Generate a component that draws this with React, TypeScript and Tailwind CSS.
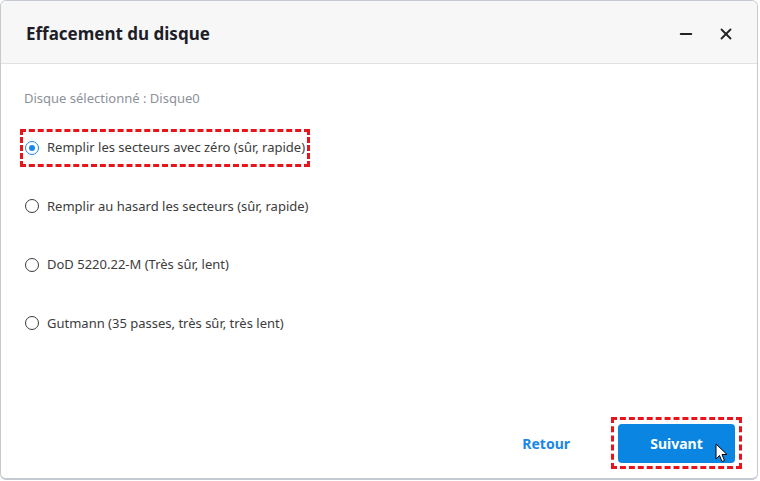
import { Minus, X } from 'lucide-react'

const options = [
  'Remplir les secteurs avec zéro (sûr, rapide)',
  'Remplir au hasard les secteurs (sûr, rapide)',
  'DoD 5220.22-M (Très sûr, lent)',
  'Gutmann (35 passes, très sûr, très lent)',
]

function Radio({ checked }: { checked: boolean }) {
  return (
    <span
      className={
        checked
          ? 'flex h-[14px] w-[14px] items-center justify-center rounded-full border-[1.5px] border-[#1a86e8]'
          : 'flex h-[14px] w-[14px] items-center justify-center rounded-full border-[1.5px] border-[#3a3a3a]'
      }
    >
      {checked && <span className="h-[6px] w-[6px] rounded-full bg-[#1a86e8]" />}
    </span>
  )
}

function Cursor() {
  return (
    <svg className="absolute left-[715px] top-[443px]" width="14" height="21" viewBox="0 0 14 21">
      <path d="M1 1 L1 16 L4.5 12.5 L7 18.5 L9.5 17.5 L7 11.5 L12 11.5 Z" fill="#fff" stroke="#000" strokeWidth="1" strokeLinejoin="round" />
    </svg>
  )
}

export default function App() {
  return (
    <div className="relative h-[481px] w-[760px] bg-white" style={{ fontFamily: '"Noto Sans", "Segoe UI", sans-serif' }}>
      <div className="flex h-[480px] w-[758px] flex-col overflow-hidden rounded-[6px] border border-b-2 border-[#c5c9d1] bg-white">
        <div className="flex h-[63px] shrink-0 items-center justify-between border-b border-[#e2e2e2] bg-[#f7f7f7] pl-[25px] pr-[22px] pt-[3px]">
          <h1 className="text-[17px] font-bold text-[#1e1e28]">Effacement du disque</h1>
          <div className="flex items-center gap-[22px]">
            <Minus size={18} strokeWidth={2.6} className="text-[#222]" />
            <X size={18} strokeWidth={2.4} className="text-[#222]" />
          </div>
        </div>
        <div className="flex flex-1 flex-col pl-[23px] pr-[15px] pt-[25px]">
          <p className="text-[13px] text-[#8d9199]">Disque sélectionné : Disque0</p>
          <div className="mt-[10px] flex flex-col">
            {options.map((o, i) => (
              <div key={o} className="flex h-[58.5px] items-center">
                <label
                  className={
                    i === 0
                      ? '-ml-[4px] flex h-[38px] items-center gap-[8px] border-[3px] border-dashed border-[#e8141c] pl-[2px] pr-[2px]'
                      : 'flex items-center gap-[8px] pl-[1px]'
                  }
                >
                  <Radio checked={i === 0} />
                  <span className="text-[13px] text-[#3c3c3c]">{o}</span>
                </label>
              </div>
            ))}
          </div>
          <div className="mt-auto mb-[9px] flex items-center justify-end gap-[41px]">
            <button className="text-[14px] font-bold text-[#1a86e8]">Retour</button>
            <div className="flex h-[52px] w-[131px] items-center justify-center border-[3px] border-dashed border-[#e8141c]">
              <button className="h-[39px] w-[117px] rounded-[4px] bg-[#0a85e2] text-[14px] font-bold text-white">Suivant</button>
            </div>
          </div>
        </div>
      </div>
      <Cursor />
    </div>
  )
}
